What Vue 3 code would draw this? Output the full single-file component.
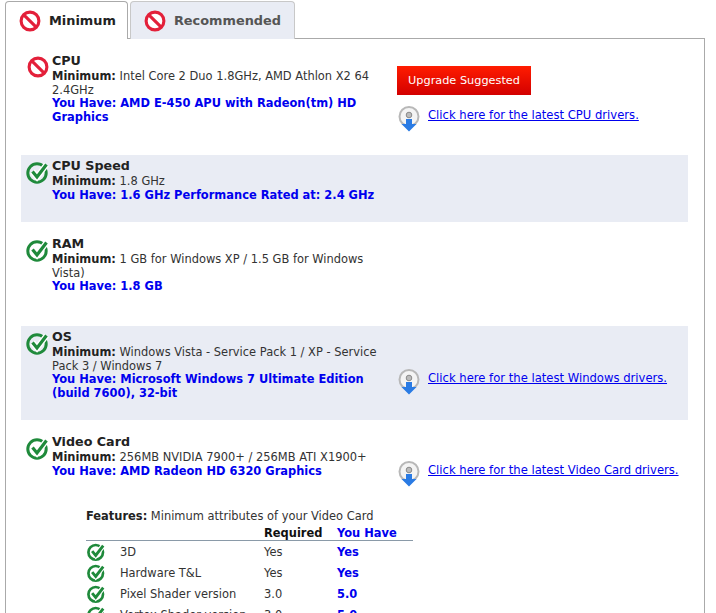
<script setup>
const requirements = [
  {
    name: "CPU",
    ok: false,
    minimum: "Intel Core 2 Duo 1.8GHz, AMD Athlon X2 64 2.4GHz",
    have: "AMD E-450 APU with Radeon(tm) HD Graphics",
    upgrade: true,
    driver: "CPU",
    side: "side-cpu",
  },
  {
    name: "CPU Speed",
    ok: true,
    shaded: true,
    minimum: "1.8 GHz",
    have: "1.6 GHz Performance Rated at: 2.4 GHz",
  },
  {
    name: "RAM",
    ok: true,
    minimum: "1 GB for Windows XP / 1.5 GB for Windows Vista)",
    have: "1.8 GB",
  },
  {
    name: "OS",
    ok: true,
    shaded: true,
    minimum: "Windows Vista - Service Pack 1 / XP - Service Pack 3 / Windows 7",
    have: "Microsoft Windows 7 Ultimate Edition (build 7600), 32-bit",
    driver: "Windows",
    side: "side-os",
  },
  {
    name: "Video Card",
    ok: true,
    minimum: "256MB NVIDIA 7900+ / 256MB ATI X1900+",
    have: "AMD Radeon HD 6320 Graphics",
    driver: "Video Card",
    side: "side-video",
  },
];

const features = [
  { name: "3D", required: "Yes", have: "Yes" },
  { name: "Hardware T&L", required: "Yes", have: "Yes" },
  { name: "Pixel Shader version", required: "3.0", have: "5.0" },
  { name: "Vertex Shader version", required: "3.0", have: "5.0" },
];
</script>

<template>
  <div class="page">
    <div class="tabs">
      <div class="tab active">
        <svg class="tab-icon" viewBox="0 0 24 24">
          <circle cx="12" cy="12" r="9.7" fill="#fff" stroke="#e3203a" stroke-width="3.4" />
          <path d="M5.5 5.5 18.5 18.5" stroke="#e3203a" stroke-width="3.4" />
        </svg>
        Minimum
      </div>
      <div class="tab">
        <svg class="tab-icon" viewBox="0 0 24 24">
          <circle cx="12" cy="12" r="9.7" fill="#fff" stroke="#e3203a" stroke-width="3.4" />
          <path d="M5.5 5.5 18.5 18.5" stroke="#e3203a" stroke-width="3.4" />
        </svg>
        Recommended
      </div>
    </div>

    <div class="panel">
      <div
        v-for="req in requirements"
        :key="req.name"
        class="req"
        :class="{ shaded: req.shaded }"
      >
        <svg v-if="!req.ok" class="status no" viewBox="0 0 24 24">
          <circle cx="12" cy="12" r="9.7" fill="#fff" stroke="#e3203a" stroke-width="3.4" />
          <path d="M5.5 5.5 18.5 18.5" stroke="#e3203a" stroke-width="3.4" />
        </svg>
        <svg v-else class="status" viewBox="0 0 24 24">
          <circle cx="11" cy="13" r="9.2" fill="none" stroke="#1f8a3b" stroke-width="3" />
          <path d="M6.5 11.500 11 17 20.500 4.500" fill="none" stroke="#fff" stroke-width="6" />
          <path d="M6.5 11.500 11 17 20.500 4.500" fill="none" stroke="#1f8a3b" stroke-width="3.200" />
        </svg>

        <div class="info">
          <h3>{{ req.name }}</h3>
          <p><b>Minimum:</b> {{ req.minimum }}</p>
          <p class="have">You Have: {{ req.have }}</p>
        </div>

        <div class="side" :class="req.side">
          <div v-if="req.upgrade" class="upgrade">Upgrade Suggested</div>
          <div v-if="req.driver" class="driver">
            <svg class="disc" viewBox="0 0 22 26">
              <circle cx="11" cy="10.500" r="9.500" fill="#f4f4f4" stroke="#b8b8b8" stroke-width="2" />
              <circle cx="11" cy="9" r="2.800" fill="#bbb" stroke="#8a8a8a" />
              <path d="M8 13h6v5h4.500L11 25.500 3.500 18H8z" fill="#2a7be4" />
            </svg>
            <a href="#">Click here for the latest {{ req.driver }} drivers.</a>
          </div>
        </div>
      </div>

      <div class="features">
        <p class="features-title"><b>Features:</b> Minimum attributes of your Video Card</p>
        <table>
          <thead>
            <tr>
              <th class="col-icon"></th>
              <th class="col-name"></th>
              <th class="col-req">Required</th>
              <th class="col-have">You Have</th>
            </tr>
          </thead>
          <tbody>
            <tr v-for="f in features" :key="f.name">
              <td>
                <svg class="small-check" viewBox="0 0 24 24">
                  <circle cx="11" cy="13" r="9.200" fill="none" stroke="#1f8a3b" stroke-width="3.400" />
                  <path d="M6.500 11.500 11 17 20.500 4.500" fill="none" stroke="#fff" stroke-width="6.500" />
                  <path d="M6.500 11.500 11 17 20.500 4.500" fill="none" stroke="#1f8a3b" stroke-width="3.600" />
                </svg>
              </td>
              <td>{{ f.name }}</td>
              <td>{{ f.required }}</td>
              <td class="have">{{ f.have }}</td>
            </tr>
          </tbody>
        </table>
      </div>
    </div>
  </div>
</template>

<style>
html,
body {
  margin: 0;
  background: #fff;
  overflow: hidden;
}
</style>

<style scoped>
.page {
  width: 716px;
  height: 613px;
  overflow: hidden;
  box-sizing: border-box;
  padding: 1px 11px 0 5px;
  font-family: "DejaVu Sans", Verdana, sans-serif;
  font-size: 11.45px;
  color: #333;
}
.tabs {
  display: flex;
  gap: 2px;
  height: 38px;
  position: relative;
  z-index: 1;
}
.tab {
  display: flex;
  align-items: center;
  gap: 8px;
  box-sizing: border-box;
  height: 38px;
  padding: 0 13px;
  background: #e9ecf4;
  border: 1px solid #c8c8c8;
  border-bottom: 0;
  border-radius: 4px 4px 0 0;
  font-size: 12.900px;
  font-weight: bold;
  color: #555;
}
.tab.active {
  background: #fff;
  color: #222;
  border-color: #aaa;
  padding-right: 11px;
}
.tab-icon {
  width: 22px;
  height: 22px;
}
.panel {
  border: 1px solid #aaa;
  padding: 11px 16px 0 15px;
  margin-top: -1px;
}
.req {
  display: grid;
  grid-template-columns: 31px 345px 1fr;
  margin-bottom: 11px;
  padding-top: 3px;
}
.req:nth-child(3) {
  margin-bottom: 12.500px;
}
.req.shaded {
  background: #e9ecf4;
}
.status {
  width: 24px;
  height: 24px;
  margin: 2px 0 0 5px;
}
.status.no {
  width: 22px;
  height: 22px;
  margin: 3px 0 0 6px;
}
.info {
  width: 340px;
  padding-bottom: 20px;
}
h3 {
  margin: 0 0 1px;
  font-size: 12.700px;
  line-height: 16px;
  color: #222;
}
p {
  margin: 0;
  line-height: 13.5px;
}
b {
  color: #222;
}
.have {
  font-weight: bold;
  color: #0000ee;
}
.side-cpu {
  padding-top: 13px;
}
.side-os {
  padding-top: 40px;
}
.side-video {
  padding-top: 27px;
}
.upgrade {
  width: 134px;
  height: 29px;
  line-height: 29px;
  text-align: center;
  color: #fff;
  font-size: 11.300px;
  background: linear-gradient(#ff1c00, #d30000);
  margin-bottom: 11px;
}
.driver {
  display: flex;
  align-items: flex-start;
  gap: 8px;
  font-size: 11.600px;
}
.disc {
  width: 22px;
  height: 26px;
  margin-left: 1px;
}
.driver a {
  color: #0000ee;
  line-height: 14px;
  margin-top: 2px;
}
.features {
  margin: 1px 0 0 65px;
}
.features-title {
  margin-bottom: 3px;
  line-height: 14px;
}
table {
  border-collapse: collapse;
  width: 327px;
  table-layout: fixed;
}
th {
  text-align: left;
  color: #111;
  height: 14px;
  padding: 0;
  border-bottom: 1px solid #8a9aa8;
}
th.col-icon {
  width: 34px;
}
th.col-name {
  width: 144px;
}
th.col-req {
  width: 73px;
}
th.col-have {
  color: #0000ee;
}
td {
  height: 21px;
  padding: 0;
}
.small-check {
  display: block;
  width: 19px;
  height: 19px;
  margin: -1px 0 0 1px;
}
</style>
